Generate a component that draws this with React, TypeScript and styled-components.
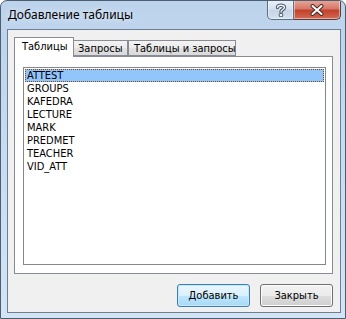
import styled, { createGlobalStyle } from 'styled-components'

const GlobalStyle = createGlobalStyle`
  body {
    margin: 0;
    background: #fff;
  }
`

const uiFont = `'DejaVu Sans Condensed', 'Liberation Sans', sans-serif`

const Window = styled.div`
  box-sizing: border-box;
  width: 346px;
  height: 319px;
  border: 1px solid #4e5e72;
  border-radius: 7px 7px 0 0;
  background: linear-gradient(180deg, #bcd3ec 0%, #c7dbf1 45%, #d3e4f5 100%);
  display: flex;
  flex-direction: column;
  overflow: hidden;
`

const TitleBar = styled.div`
  height: 28px;
  display: flex;
  align-items: flex-start;
  flex-shrink: 0;
`

const TitleText = styled.div`
  margin: 6px 0 0 7px;
  font: 12px 'Noto Sans', 'Liberation Sans', sans-serif;
  line-height: 16px;
  color: #000;
  text-shadow: 0 0 6px rgba(255, 255, 255, 0.9);
`

const CaptionButtons = styled.div`
  margin: -1px 4px 0 auto;
  display: flex;
`

const CaptionButton = styled.div<{ $w: number; $close?: boolean }>`
  box-sizing: border-box;
  width: ${(p) => p.$w}px;
  height: 20px;
  display: flex;
  align-items: center;
  justify-content: center;
  border: 1px solid ${(p) => (p.$close ? '#5b3b3b' : '#5e6e84')};
  border-top: none;
  ${(p) => (p.$close ? 'border-left: none;' : '')}
  border-radius: ${(p) => (p.$close ? '0 0 5px 0' : '0 0 0 5px')};
  background: ${(p) =>
    p.$close
      ? 'linear-gradient(180deg, #e9a99a 0%, #d7796a 45%, #c2412b 55%, #d06b55 100%)'
      : 'linear-gradient(180deg, #e9f0f8 0%, #d8e3f0 45%, #c6d5e7 55%, #d4e1ef 100%)'};
  box-shadow: inset 0 0 0 1px rgba(255, 255, 255, 0.45);
`

const Client = styled.div`
  flex: 1;
  margin: 0 4px 5px 6px;
  border: 1px solid #6f7f93;
  background: #f0f0f0;
  display: flex;
  flex-direction: column;
  padding: 7px 7px 5px 6px;
  font: 11px ${uiFont};
  color: #000;
`

const TabStrip = styled.div`
  height: 20px;
  margin-bottom: -1px;
  padding-left: 2px;
  display: flex;
  align-items: flex-start;
  position: relative;
  z-index: 1;
`

const Tab = styled.div<{ $w: number; $active?: boolean }>`
  box-sizing: border-box;
  width: ${(p) => (p.$active ? p.$w + 4 : p.$w)}px;
  margin: ${(p) => (p.$active ? '0 -2px' : '3px 0 0 0')};
  height: ${(p) => (p.$active ? 20 : 16)}px;
  padding: ${(p) => (p.$active ? '2px 0 0 7px' : '1px 0 0 5px')};
  line-height: 13px;
  border: 1px solid #898c95;
  border-bottom: ${(p) => (p.$active ? 'none' : '1px solid #898c95')};
  background: ${(p) =>
    p.$active ? '#fff' : 'linear-gradient(180deg, #f3f3f3 0%, #ebebeb 50%, #e2e2e2 51%, #dadada 100%)'};
  position: relative;
  z-index: ${(p) => (p.$active ? 2 : 1)};
  white-space: nowrap;
`

const Panel = styled.div`
  flex: 1;
  background: #fff;
  border: 1px solid #898c95;
  padding: 10px 6px 8px 8px;
  display: flex;
`

const ListBox = styled.div`
  flex: 1;
  border: 1px solid #828790;
  background: #fff;
  padding: 1px;
`

const Item = styled.div<{ $selected?: boolean }>`
  height: 13px;
  line-height: 13px;
  padding-left: 2px;
  background: ${(p) => (p.$selected ? '#93c5fd' : 'transparent')};
  outline: ${(p) => (p.$selected ? '1px dotted #7d4a16' : 'none')};
  outline-offset: -1px;
`

const ButtonRow = styled.div`
  margin-top: 10px;
  display: flex;
  justify-content: flex-end;
  gap: 10px;
`

const Button = styled.div<{ $default?: boolean }>`
  box-sizing: border-box;
  width: 73px;
  height: 23px;
  display: flex;
  align-items: center;
  justify-content: center;
  border: 1px solid ${(p) => (p.$default ? '#3c7fb1' : '#707070')};
  border-radius: 3px;
  background: ${(p) =>
    p.$default
      ? 'linear-gradient(180deg, #eaf6fd 0%, #d9f0fc 50%, #bee6fd 51%, #a7d9f5 100%)'
      : 'linear-gradient(180deg, #f2f2f2 0%, #ebebeb 50%, #dddddd 51%, #cfcfcf 100%)'};
  box-shadow: inset 0 0 0 1px ${(p) => (p.$default ? '#c6e8fb' : '#fcfcfc')};
`

const tables = ['ATTEST', 'GROUPS', 'KAFEDRA', 'LECTURE', 'MARK', 'PREDMET', 'TEACHER', 'VID_ATT']

const HelpIcon = () => (
  <svg width="12" height="14" viewBox="0 0 12 14">
    <path
      d="M2.5 4.5 C2.5 1.5 9.5 1.5 9.5 4.5 C9.5 6.5 6 6.5 6 9"
      fill="none"
      stroke="#4a5566"
      strokeWidth="3.4"
      strokeLinecap="round"
    />
    <path
      d="M2.5 4.5 C2.5 1.5 9.5 1.5 9.5 4.5 C9.5 6.5 6 6.5 6 9"
      fill="none"
      stroke="#eef3f9"
      strokeWidth="1.4"
      strokeLinecap="round"
    />
    <rect x="4.3" y="10.5" width="3.4" height="3.2" rx="0.8" fill="#eef3f9" stroke="#4a5566" strokeWidth="1" />
  </svg>
)

const CloseIcon = () => (
  <svg width="14" height="12" viewBox="0 0 14 12">
    <path d="M2.5 2 L11.5 10 M11.5 2 L2.5 10" stroke="#4a2a25" strokeWidth="4" strokeLinecap="round" />
    <path d="M2.5 2 L11.5 10 M11.5 2 L2.5 10" stroke="#fff" strokeWidth="2" strokeLinecap="round" />
  </svg>
)

export default function App() {
  return (
    <>
      <GlobalStyle />
      <Window>
        <TitleBar>
          <TitleText>Добавление таблицы</TitleText>
          <CaptionButtons>
            <CaptionButton $w={27}>
              <HelpIcon />
            </CaptionButton>
            <CaptionButton $w={47} $close>
              <CloseIcon />
            </CaptionButton>
          </CaptionButtons>
        </TitleBar>
        <Client>
          <TabStrip>
            <Tab $w={56} $active>
              Таблицы
            </Tab>
            <Tab $w={56}>Запросы</Tab>
            <Tab $w={108}>Таблицы и запросы</Tab>
          </TabStrip>
          <Panel>
            <ListBox>
              {tables.map((t, i) => (
                <Item key={t} $selected={i === 0}>
                  {t}
                </Item>
              ))}
            </ListBox>
          </Panel>
          <ButtonRow>
            <Button $default>Добавить</Button>
            <Button>Закрыть</Button>
          </ButtonRow>
        </Client>
      </Window>
    </>
  )
}
